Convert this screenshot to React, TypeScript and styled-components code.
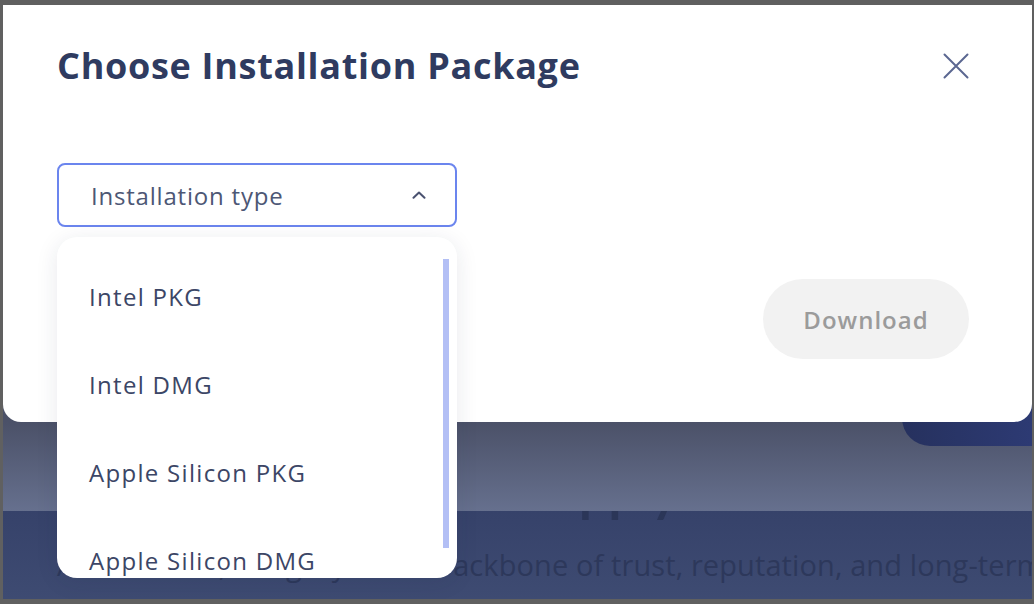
import * as React from "react";
import styled, { createGlobalStyle } from "styled-components";

/* =========================
 * Dados
 * ========================= */

const PACKAGE_OPTIONS = [
  "Intel PKG",
  "Intel DMG",
  "Apple Silicon PKG",
  "Apple Silicon DMG",
];

/* =========================
 * Estilos globais
 * ========================= */

const GlobalStyle = createGlobalStyle`
  html,
  body {
    margin: 0;
    padding: 0;
    background: #606060;
  }

  body {
    font-family: "Open Sans", "Liberation Sans", sans-serif;
  }

  * {
    box-sizing: border-box;
  }
`;

/* =========================
 * Fundo da página (sob o overlay)
 * ========================= */

const Frame = styled.div`
  width: 1034px;
  height: 604px;
  padding: 5px 2px 5px 3px;
  background: #606060;
`;

const Viewport = styled.div`
  position: relative;
  width: 100%;
  height: 100%;
  overflow: hidden;
`;

const Backdrop = styled.div`
  display: flex;
  flex-direction: column;
  height: 100%;
`;

const HeaderBand = styled.div`
  height: 506px;
  display: flex;
  justify-content: flex-end;
  align-items: flex-end;
  padding-bottom: 65px;
  background: linear-gradient(180deg, #4b5168 417px, #66708e 506px);
`;

const CtaButton = styled.div`
  width: 170px;
  height: 56px;
  margin-right: -40px;
  border-radius: 28px;
  background: linear-gradient(90deg, #26315e 0%, #2f3d7a 100%);
`;

const ContentBand = styled.div`
  flex: 1;
  overflow: hidden;
  background: linear-gradient(180deg, #36426a 0%, #3e4b72 100%);
`;

const HeroTitle = styled.h2`
  margin: -50px 0 0;
  padding-right: 74px;
  font-family: "Lato", "Open Sans", sans-serif;
  font-size: 52px;
  line-height: 60px;
  font-weight: 700;
  text-align: center;
  color: #2b3658;
`;

const Lead = styled.p`
  margin: 24px 0 0;
  padding-left: 54px;
  white-space: nowrap;
  font-family: "Open Sans", "Lato", sans-serif;
  font-size: 29px;
  line-height: 40px;
  letter-spacing: 0.1px;
  color: #2d385b;
`;

/* =========================
 * Modal
 * ========================= */

const Modal = styled.div`
  position: absolute;
  top: 0;
  left: 0;
  right: 0;
  height: 417px;
  display: flex;
  flex-direction: column;
  padding: 41px 63px 63px 54px;
  background: #ffffff;
  border-radius: 0 0 18px 18px;
`;

const ModalHeader = styled.div`
  display: flex;
  justify-content: space-between;
  align-items: center;
  height: 40px;
`;

const Title = styled.h1`
  margin: 0;
  font-family: "Open Sans", "Liberation Sans", sans-serif;
  font-size: 36px;
  line-height: 40px;
  font-weight: 700;
  letter-spacing: 0.7px;
  color: #2f3b60;
`;

const CloseButton = styled.button`
  display: flex;
  align-items: center;
  justify-content: center;
  width: 26px;
  height: 26px;
  padding: 0;
  border: none;
  background: transparent;
  cursor: pointer;
`;

const SelectWrap = styled.div`
  position: relative;
  width: 400px;
  margin-top: 77px;
`;

const SelectBox = styled.div`
  display: flex;
  align-items: center;
  justify-content: space-between;
  height: 64px;
  padding: 0 29px 0 32px;
  border: 2px solid #6b85ee;
  border-radius: 8px;
  background: #ffffff;
  font-size: 24px;
  letter-spacing: 0.8px;
  color: #4d5775;
`;

const Menu = styled.div`
  position: absolute;
  top: 74px;
  left: 0;
  width: 400px;
  height: 341px;
  overflow: hidden;
  border-radius: 20px;
  background: #ffffff;
  box-shadow: 0 4px 22px rgba(30, 40, 70, 0.1);
  z-index: 2;
`;

const MenuList = styled.ul`
  list-style: none;
  margin: 0;
  padding: 15px 0 0;
`;

const MenuItem = styled.li`
  display: flex;
  align-items: center;
  height: 88px;
  padding-left: 32px;
  font-size: 24px;
  letter-spacing: 1.3px;
  color: #3c4666;
  cursor: pointer;
`;

const ScrollThumb = styled.div`
  position: absolute;
  top: 22px;
  right: 8px;
  width: 6px;
  height: 289px;
  background: #b3bff5;
`;

const Footer = styled.div`
  display: flex;
  justify-content: flex-end;
  margin-top: 52px;
`;

const DownloadButton = styled.button`
  width: 206px;
  height: 80px;
  border: none;
  border-radius: 40px;
  background: #f2f2f2;
  font-family: "Open Sans", "Liberation Sans", sans-serif;
  font-size: 24px;
  font-weight: 600;
  letter-spacing: 1px;
  color: #9b9b9b;

  &:disabled {
    cursor: not-allowed;
  }
`;

/* =========================
 * Ícones
 * ========================= */

const CloseIcon = () => (
  <svg width="26" height="26" viewBox="0 0 26 26" fill="none">
    <path
      d="M1.5 1.5L24.5 24.5M24.5 1.5L1.5 24.5"
      stroke="#5b6791"
      strokeWidth="2"
      strokeLinecap="round"
    />
  </svg>
);

const ChevronUp = () => (
  <svg width="14" height="8" viewBox="0 0 14 8" fill="none">
    <path
      d="M1.5 6.8L7 1.5L12.5 6.8"
      stroke="#4a5270"
      strokeWidth="2"
      strokeLinecap="round"
      strokeLinejoin="round"
    />
  </svg>
);

/* =========================
 * Componente
 * ========================= */

const App: React.FC = () => {
  const [selected, setSelected] = React.useState<string | null>(null);

  return (
    <>
      <GlobalStyle />
      <Frame>
        <Viewport>
          <Backdrop>
            <HeaderBand>
              <CtaButton />
            </HeaderBand>
            <ContentBand>
              <HeroTitle>Where We Apply</HeroTitle>
              <Lead>
                At the heart, integrity is the backbone of trust, reputation,
                and long-term success.
              </Lead>
            </ContentBand>
          </Backdrop>

          <Modal>
            <ModalHeader>
              <Title>Choose Installation Package</Title>
              <CloseButton aria-label="Close">
                <CloseIcon />
              </CloseButton>
            </ModalHeader>

            <SelectWrap>
              <SelectBox>
                <span>{selected ?? "Installation type"}</span>
                <ChevronUp />
              </SelectBox>

              <Menu>
                <MenuList>
                  {PACKAGE_OPTIONS.map((opt) => (
                    <MenuItem key={opt} onClick={() => setSelected(opt)}>
                      {opt}
                    </MenuItem>
                  ))}
                </MenuList>
                <ScrollThumb />
              </Menu>
            </SelectWrap>

            <Footer>
              <DownloadButton disabled={!selected}>Download</DownloadButton>
            </Footer>
          </Modal>
        </Viewport>
      </Frame>
    </>
  );
};

export default App;
